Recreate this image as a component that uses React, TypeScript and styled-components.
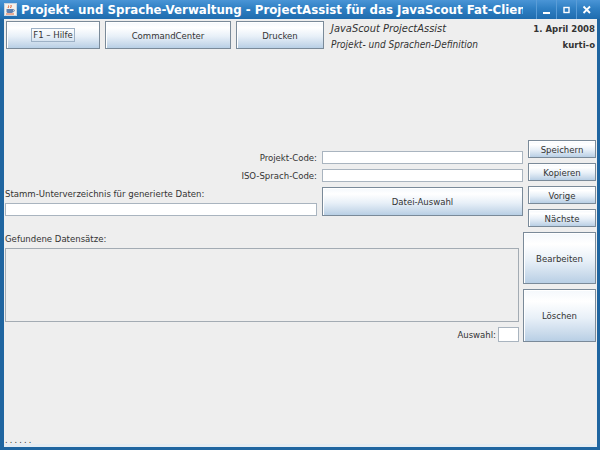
import * as React from 'react';
import styled, { createGlobalStyle } from 'styled-components';

const GlobalStyle = createGlobalStyle`
    html, body {
        margin: 0;
        padding: 0;
        background: #eeeeee;
    }
    * {
        box-sizing: border-box;
    }
`;

const uiFont = `"DejaVu Sans Condensed", "DejaVu Sans", sans-serif`;

const Window = styled.div`
    width: 600px;
    height: 450px;
    display: flex;
    flex-direction: column;
    background: #1f65a0;
    font-family: ${uiFont};
    font-stretch: condensed;
    color: #333333;
    overflow: hidden;
`;

const TitleBar = styled.div`
    height: 19px;
    flex: none;
    display: flex;
    align-items: center;
    background: linear-gradient(to bottom, #4a95d6 0%, #2f7fc3 45%, #1f6cae 100%);
    padding-left: 4px;
`;

const TitleText = styled.div`
    flex: 1;
    min-width: 0;
    margin: 0 13px 0 4px;
    overflow: hidden;
    white-space: nowrap;
    color: #ffffff;
    font-family: "DejaVu Sans", sans-serif;
    font-stretch: normal;
    font-weight: bold;
    font-size: 11.8px;
`;

const WinButtons = styled.div`
    display: flex;
    height: 19px;
    margin-right: 4px;
`;

const WinButton = styled.div`
    width: 20px;
    height: 19px;
    display: flex;
    align-items: center;
    justify-content: center;
    border-left: 1px solid #5a9cd6;
`;

const Body = styled.div`
    flex: 1;
    margin: 0 3px 3px 4px;
    background: #eeeeee;
    display: flex;
    flex-direction: column;
`;

const Toolbar = styled.div`
    height: 30px;
    display: flex;
    align-items: flex-start;
    padding: 2px 0 0 2px;
`;

const ButtonRow = styled.div`
    display: flex;
    gap: 5px;
`;

const Button = styled.div<{ $w: number; $h: number }>`
    width: ${(p) => p.$w}px;
    height: ${(p) => p.$h}px;
    display: flex;
    align-items: center;
    justify-content: center;
    border: 1px solid #7a8a99;
    box-shadow: inset 1px 1px 0 #ffffff;
    background: linear-gradient(
        to bottom,
        #f4f8fc 0%,
        #ffffff 22%,
        #e8f0f8 55%,
        #c9daeb 85%,
        #b8cfe5 100%
    );
    font-size: 9.5px;
    color: #333333;
    white-space: nowrap;
`;

const Focus = styled.span`
    border: 1px solid #9db1c6;
    padding: 0 1px;
    line-height: 12px;
`;

const Header = styled.div`
    flex: 1;
    display: grid;
    grid-template-columns: 1fr auto;
    row-gap: 3px;
    padding: 1px 2px 0 7px;
    font-size: 9.5px;
    line-height: 13px;
`;

const Product = styled.div<{ $size: number }>`
    font-style: italic;
    font-size: ${(p) => p.$size}px;
    color: #333333;
`;

const Meta = styled.div`
    font-weight: bold;
    text-align: right;
    color: #333333;
`;

const Spacer = styled.div`
    height: 91px;
`;

const SectionTop = styled.div`
    display: flex;
    align-items: flex-start;
`;

const FieldGrid = styled.div`
    width: 519px;
    display: grid;
    grid-template-columns: 312px 201px;
    grid-template-rows: 13px 13px 29px;
    column-gap: 5px;
    row-gap: 5px;
    padding: 11px 0 0 1px;
`;

const RowLabel = styled.div`
    font-size: 9.5px;
    text-align: right;
    line-height: 13px;
    white-space: nowrap;
`;

const TextField = styled.div<{ $w?: number; $h: number }>`
    width: ${(p) => (p.$w ? `${p.$w}px` : '100%')};
    height: ${(p) => p.$h}px;
    background: #ffffff;
    border: 1px solid #a9b4bf;
`;

const StackCell = styled.div`
    display: flex;
    flex-direction: column;
    justify-content: space-between;
    font-size: 9.5px;
    line-height: 13px;
    white-space: nowrap;
`;

const SmallButtons = styled.div`
    margin-left: 5px;
    display: flex;
    flex-direction: column;
    gap: 5px;
`;

const SectionBottom = styled.div`
    display: flex;
    align-items: flex-start;
    margin-top: 5px;
`;

const ListArea = styled.div`
    width: 514px;
    margin-left: 1px;
    display: flex;
    flex-direction: column;
    font-size: 9.5px;
`;

const SectionLabel = styled.div`
    line-height: 13px;
    margin-bottom: 3px;
`;

const ListBox = styled.div`
    height: 74px;
    border: 1px solid #a3abb3;
    background: #eeeeee;
`;

const SelectRow = styled.div`
    display: flex;
    justify-content: flex-end;
    align-items: center;
    gap: 2px;
    margin-top: 5px;
    line-height: 15px;
`;

const BigButtons = styled.div`
    margin-left: 4px;
    display: flex;
    flex-direction: column;
    gap: 5px;
`;

const StatusBar = styled.div`
    margin-top: auto;
    height: 10px;
    padding-left: 1px;
    font-size: 9px;
    line-height: 6px;
    letter-spacing: 2.2px;
    color: #333333;
    border-bottom: 3px solid #e4ecf3;
`;

const JavaIcon = () => (
    <svg width="13" height="13" viewBox="0 0 13 13">
        <rect x="0.5" y="0.5" width="12" height="12" fill="#f4f1ec" stroke="#c8d4e0" />
        <path d="M4 5 Q5 3.5 4.5 2.5 M6.5 5 Q7.5 3.5 7 2" stroke="#e05a2a" strokeWidth="1" fill="none" />
        <path d="M2.5 6 H9 V8.5 Q9 10 7.5 10 H4 Q2.5 10 2.5 8.5 Z" fill="#5a7fb0" />
        <path d="M9 6.5 Q10.8 6.5 10.3 8 Q10 8.8 9 8.8" stroke="#5a7fb0" strokeWidth="0.9" fill="none" />
        <path d="M2 11 H10" stroke="#e05a2a" strokeWidth="0.9" />
    </svg>
);

const MinIcon = () => (
    <svg width="10" height="10" viewBox="0 0 10 10">
        <rect x="1" y="7" width="7" height="2" fill="#ffffff" />
    </svg>
);

const MaxIcon = () => (
    <svg width="10" height="10" viewBox="0 0 10 10">
        <rect x="2" y="2.5" width="5" height="5" fill="none" stroke="#ffffff" strokeWidth="1.4" />
    </svg>
);

const CloseIcon = () => (
    <svg width="10" height="10" viewBox="0 0 10 10">
        <path d="M1.5 1.5 L8 8 M8 1.5 L1.5 8" stroke="#ffffff" strokeWidth="1.8" />
    </svg>
);

export default function App() {
    return (
        <>
            <GlobalStyle />
            <Window>
                <TitleBar>
                    <JavaIcon />
                    <TitleText>
                        Projekt- und Sprache-Verwaltung - ProjectAssist für das JavaScout Fat-Client
                    </TitleText>
                    <WinButtons>
                        <WinButton>
                            <MinIcon />
                        </WinButton>
                        <WinButton>
                            <MaxIcon />
                        </WinButton>
                        <WinButton>
                            <CloseIcon />
                        </WinButton>
                    </WinButtons>
                </TitleBar>
                <Body>
                    <Toolbar>
                        <ButtonRow>
                            <Button $w={94} $h={28}>
                                <Focus>F1 – Hilfe</Focus>
                            </Button>
                            <Button $w={126} $h={28}>
                                CommandCenter
                            </Button>
                            <Button $w={88} $h={28}>
                                Drucken
                            </Button>
                        </ButtonRow>
                        <Header>
                            <Product $size={11}>JavaScout ProjectAssist</Product>
                            <Meta>1. April 2008</Meta>
                            <Product $size={10}>Projekt- und Sprachen-Definition</Product>
                            <Meta>kurti-o</Meta>
                        </Header>
                    </Toolbar>
                    <Spacer />
                    <SectionTop>
                        <FieldGrid>
                            <RowLabel>Projekt-Code:</RowLabel>
                            <TextField $h={13} />
                            <RowLabel>ISO-Sprach-Code:</RowLabel>
                            <TextField $h={13} />
                            <StackCell>
                                <span>Stamm-Unterverzeichnis für generierte Daten:</span>
                                <TextField $h={13} />
                            </StackCell>
                            <Button $w={201} $h={29}>
                                Datei-Auswahl
                            </Button>
                        </FieldGrid>
                        <SmallButtons>
                            <Button $w={68} $h={18}>
                                Speichern
                            </Button>
                            <Button $w={68} $h={18}>
                                Kopieren
                            </Button>
                            <Button $w={68} $h={18}>
                                Vorige
                            </Button>
                            <Button $w={68} $h={18}>
                                Nächste
                            </Button>
                        </SmallButtons>
                    </SectionTop>
                    <SectionBottom>
                        <ListArea>
                            <SectionLabel>Gefundene Datensätze:</SectionLabel>
                            <ListBox />
                            <SelectRow>
                                <span>Auswahl:</span>
                                <TextField $w={21} $h={15} />
                            </SelectRow>
                        </ListArea>
                        <BigButtons>
                            <Button $w={73} $h={52}>
                                Bearbeiten
                            </Button>
                            <Button $w={73} $h={53}>
                                Löschen
                            </Button>
                        </BigButtons>
                    </SectionBottom>
                    <StatusBar>......</StatusBar>
                </Body>
            </Window>
        </>
    );
}
